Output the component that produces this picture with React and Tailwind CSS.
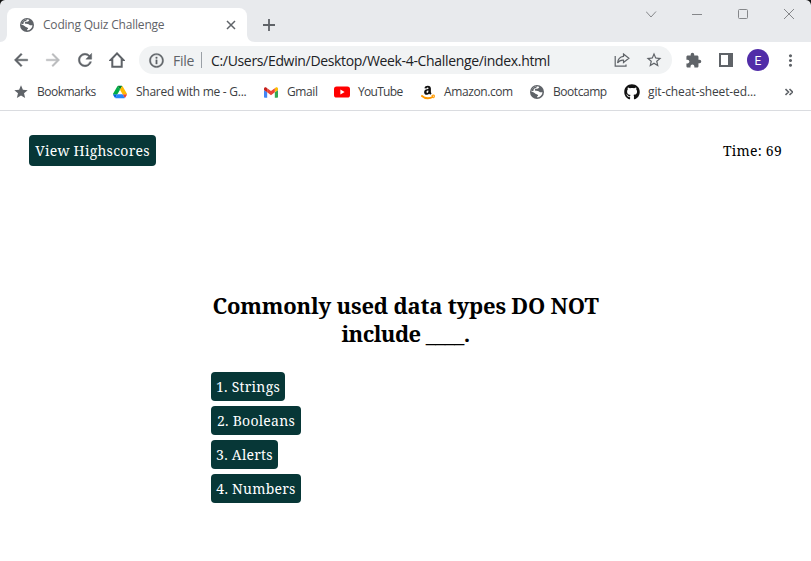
import React from "react";
import { FaGithub } from "react-icons/fa";
import { MdExtension, MdStar, MdMoreVert, MdStarOutline } from "react-icons/md";

const ui = "font-['Open_Sans','Noto_Sans',sans-serif]";

function Globe() {
  return (
    <svg width="14" height="14" viewBox="0 0 14 14" className="shrink-0">
      <circle cx="7" cy="7" r="7" fill="#5f6368" />
      <path d="M9.3 1.9C8.600 3.400 7.500 3.600 5.800 3.700 4.700 3.900 4.500 5.400 5.500 5.700 7 5.900 8.600 5.600 9.300 6.700 9.900 7.500 11 7.300 12.500 7.200 12.300 9.900 10.200 12.200 7.300 12.500L7.100 11.300C8.200 11 8.500 10.300 7.600 9.700 6.400 9.300 5.200 9 4.600 8.100 4 7.200 3 6.900 1.500 6.900 1.300 4 3.800 1.300 7 1.300 7.900 1.300 8.700 1.500 9.300 1.900Z" fill="#fff" />
      <path d="M1.500 6.500C1.600 3.800 4 1.300 7.500 1.300L6 2.900 3.800 3.700 3.500 5.800Z" fill="#5f6368" />
    </svg>
  );
}

function DriveIcon() {
  return (
    <svg width="14" height="14" viewBox="0 0 87.3 78" className="shrink-0">
      <path d="m6.6 66.85 3.85 6.65c.8 1.4 1.95 2.5 3.3 3.3l13.75-23.8H0c0 1.55.4 3.1 1.2 4.5z" fill="#0066da" />
      <path d="M43.65 25 29.9 1.2c-1.35.8-2.5 1.9-3.3 3.3L1.2 48.5A9 9 0 0 0 0 53h27.5z" fill="#00ac47" />
      <path d="M73.55 76.8c1.35-.8 2.5-1.9 3.3-3.3l9.25-16c.8-1.4 1.2-2.95 1.2-4.5H59.8l5.85 11.5z" fill="#ea4335" />
      <path d="M43.65 25 57.4 1.2C56.05.4 54.5 0 52.9 0H34.4c-1.6 0-3.15.45-4.5 1.2z" fill="#00832d" />
      <path d="M59.8 53H27.5L13.75 76.8c1.35.8 2.9 1.2 4.5 1.2h50.8c1.6 0 3.15-.45 4.5-1.2z" fill="#2684fc" />
      <path d="M73.4 26.5 60.7 4.5c-.8-1.4-1.95-2.5-3.3-3.3L43.65 25 59.8 53h27.45c0-1.55-.4-3.1-1.2-4.5z" fill="#ffba00" />
    </svg>
  );
}

function GmailIcon() {
  return (
    <svg width="14" height="11" viewBox="52 42 88 66" className="shrink-0">
      <path fill="#4285f4" d="M58 108h14V74L52 59v43c0 3.32 2.69 6 6 6" />
      <path fill="#34a853" d="M120 108h14c3.32 0 6-2.69 6-6V59l-20 15" />
      <path fill="#fbbc04" d="M120 48v26l20-15v-8c0-7.42-8.47-11.65-14.4-7.2" />
      <path fill="#ea4335" d="M72 74V48l24 18 24-18v26L96 92" />
      <path fill="#c5221f" d="M52 51v8l20 15V48l-5.6-4.2c-5.94-4.45-14.4-.22-14.4 7.2" />
    </svg>
  );
}

function YouTubeIcon() {
  return (
    <svg width="16" height="12" viewBox="0 0 16 12" className="shrink-0">
      <rect y="0.5" width="16" height="11" rx="2.6" fill="#f00" />
      <path d="M6.4 3.6 10.6 6 6.4 8.4Z" fill="#fff" />
    </svg>
  );
}

function AmazonIcon() {
  return (
    <svg width="14" height="15" viewBox="0 0 14 15" className="shrink-0">
      <path d="M3.4 3.200C3.700 1.500 5.100.7 6.800.7 8.900.7 9.900 1.800 9.900 3.500V6.900C9.900 7.600 10.200 7.900 10.600 8.400L9.200 9.800 8.200 8.700C7.500 9.500 6.700 9.800 5.800 9.800 4.200 9.800 3.100 8.800 3.100 7.200 3.100 5.100 4.800 4.200 7.400 4.100 7.500 3 7.200 2.600 6.600 2.600 6 2.600 5.700 2.900 5.500 3.500ZM7.400 5.500C6.100 5.500 5.500 6 5.500 7 5.500 8.400 7.400 8.300 7.400 6.300Z" fill="#111" fillRule="evenodd" />
      <path d="M.3 10.400C4 13.800 8.700 13.700 12.300 11.600" stroke="#f90" strokeWidth="1.9" fill="none" />
      <path d="M10.600 10.500C12 9.900 13.200 10 13.300 10.400 13.500 11 13.100 12.300 12.400 13" stroke="#f90" strokeWidth="1.1" fill="none" />
    </svg>
  );
}

function Glyph({ d, size, className }) {
  return (
    <svg width={size} height={size} viewBox="0 0 24 24" fill="currentColor" stroke="currentColor" strokeWidth="0.5" className={`shrink-0 ${className}`}>
      <path d={d} />
    </svg>
  );
}

function Bookmark({ icon, label, className }) {
  return (
    <div className={`flex h-9 shrink-0 items-center whitespace-nowrap ${className}`}>
      {icon}
      <span>{label}</span>
    </div>
  );
}

function TabStrip() {
  return (
    <div className="flex h-[42px] bg-[#e8eaed]">
      <svg width="7" height="42" viewBox="0 0 7 42" className="shrink-0">
        <path d="M0 0H5C2 .4 .4 2 0 5Z" fill="#111" />
        <path d="M7 34C7 39 4 42 0 42H7Z" fill="#fff" />
      </svg>
      <div className="mt-2 flex h-[34px] w-[240px] shrink-0 items-center rounded-t-lg bg-white pl-[13px]">
        <Globe />
        <span className="ml-[9px] w-[183px] whitespace-nowrap text-[12px] tracking-[-0.2px] text-[#5f6368]">Coding Quiz Challenge</span>
        <svg width="10" height="10" viewBox="0 0 10 10">
          <path d="M1 1 9 9M9 1 1 9" stroke="#5f6368" strokeWidth="1.5" />
        </svg>
      </div>
      <svg width="8" height="42" viewBox="0 0 8 42" className="shrink-0">
        <path d="M0 34C0 39 3 42 8 42H0Z" fill="#fff" />
      </svg>
      <svg width="12" height="12" viewBox="0 0 12 12" className="ml-2 mt-[19px] shrink-0">
        <path d="M6 0V12M0 6H12" stroke="#5f6368" strokeWidth="1.8" />
      </svg>
      <svg width="165" height="28" viewBox="0 0 165 28" className="ml-auto" fill="none" stroke="#85878a">
        <path d="M0 11.5 5 17 10 11.5" />
        <path d="M46 14.5H56" />
        <rect x="92.5" y="9.5" width="9" height="9" rx="1" />
        <path d="M138 9 148 19M148 9 138 19" />
        <path d="M160 0H165V5C164.600 2 163 .4 160 0Z" fill="#111" stroke="none" />
      </svg>
    </div>
  );
}

function Toolbar() {
  return (
    <div className="flex h-9 items-center text-[#5f6368]">
      <Glyph size={20} className="ml-[11px]" d="M20 11H7.830L13.420 5.410 12 4 4 12 12 20 13.410 18.590 7.830 13H20Z" />
      <Glyph size={20} className="ml-3 text-[#babcbe]" d="M12 4 10.590 5.410 16.170 11H4V13H16.170L10.590 18.590 12 20 20 12Z" />
      <Glyph size={20} className="ml-3" d="M17.650 6.350A7.958 7.958 0 0 0 12 4c-4.420 0-7.990 3.580-7.990 8s3.570 8 7.990 8c3.730 0 6.840-2.550 7.730-6h-2.080A5.990 5.990 0 0 1 12 18c-3.310 0-6-2.690-6-6s2.690-6 6-6c1.660 0 3.140.69 4.220 1.780L13 11h7V4z" />
      <svg width="16" height="16" viewBox="0 0 16 16" className="ml-[14px]" fill="none" stroke="#5f6368" strokeWidth="2">
        <path d="M8 1.4 1.7 8H3.300V14.800H12.700V8H14.300Z" />
      </svg>
      <div className="ml-[14px] flex h-7 w-[533px] shrink-0 items-center rounded-full bg-[#f1f3f4] pl-[9px]">
        <Glyph size={17} className="" d="M11 7h2v2h-2zm0 4h2v6h-2zm1-9C6.480 2 2 6.480 2 12s4.480 10 10 10 10-4.480 10-10S17.520 2 12 2zm0 18c-4.410 0-8-3.590-8-8s3.590-8 8-8 8 3.590 8 8-3.590 8-8 8z" />
        <span className="ml-2 w-[28px] text-[14px] tracking-[-0.3px]">File</span>
        <span className="h-4 w-px bg-[#9aa0a6]" />
        <span className="ml-[9px] w-[403px] shrink-0 whitespace-nowrap text-[14px] tracking-[-0.33px] text-[#202124]">C:/Users/Edwin/Desktop/Week-4-Challenge/index.html</span>
        <svg width="16" height="14" viewBox="0 0 16 14" className="shrink-0" fill="none" stroke="#5f6368" strokeWidth="1.2">
          <path d="M1.2 3V13.200H12V11.500" />
          <path d="M9.500 1 14.900 5.300 9.500 9.500V7.200C6.600 7 4.800 8.100 3.600 10 3.900 6.300 6 3.800 9.500 3.400Z" />
        </svg>
        <MdStarOutline size={18} className="ml-[15px] shrink-0" />
      </div>
      <MdExtension size={17} className="ml-[13px]" />
      <svg width="14" height="14" viewBox="0 0 14 14" className="ml-[17px]">
        <rect x="1" y="1" width="12" height="12" fill="none" stroke="#5f6368" strokeWidth="2" />
        <path d="M9 0H14V14H9Z" fill="#5f6368" />
      </svg>
      <div className="ml-[14px] flex size-[22px] items-center justify-center rounded-full bg-[#512da8] pt-px font-[Roboto,sans-serif] text-[12px] text-white">E</div>
      <MdMoreVert size={19} className="ml-[12px]" />
    </div>
  );
}

function BookmarksBar() {
  return (
    <div className="flex h-[33px] items-center border-b border-[#dadce0] pb-1 text-[12px] text-[#3c4043]">
      <Bookmark className="ml-[13px] w-[100px] gap-2 tracking-[-0.5px]" icon={<MdStar size={16} color="#5f6368" />} label="Bookmarks" />
      <Bookmark className="w-[151px] gap-[9px] tracking-[-0.26px]" icon={<DriveIcon />} label="Shared with me - G..." />
      <Bookmark className="w-[70px] gap-[9px] tracking-[-0.4px]" icon={<GmailIcon />} label="Gmail" />
      <Bookmark className="w-[87px] gap-2 tracking-[-0.7px]" icon={<YouTubeIcon />} label="YouTube" />
      <Bookmark className="w-[109px] gap-[9px] tracking-[-0.4px]" icon={<AmazonIcon />} label="Amazon.com" />
      <Bookmark className="w-[94px] gap-[9px] tracking-[-0.45px]" icon={<Globe />} label="Bootcamp" />
      <Bookmark className="w-[161px] gap-2 tracking-[-0.12px]" icon={<FaGithub size={16} color="#111" />} label="git-cheat-sheet-ed..." />
      <svg width="8" height="8" viewBox="0 0 8 8" fill="none" stroke="#5f6368" strokeWidth="1.6">
        <path d="M.5 1 3.500 4 .5 7M4.500 1 7.500 4 4.500 7" />
      </svg>
    </div>
  );
}

const answers = [
  { label: "1. Strings", box: "w-[74px]" },
  { label: "2. Booleans", box: "w-[90px]" },
  { label: "3. Alerts", box: "w-[67px]" },
  { label: "4. Numbers", box: "w-[90px]" },
];

function Quiz() {
  return (
    <main className="h-[450px] font-['Noto_Serif','DejaVu_Serif',serif] text-[14px] leading-[21px] tracking-[0.25px] text-black">
      <header className="flex items-center justify-between pl-[29px] pr-[29px] pt-6">
        <button className="h-[31px] w-[127px] whitespace-nowrap rounded bg-[#073737] text-white">View Highscores</button>
        <span>Time: 69</span>
      </header>
      <section className="mx-auto mt-[125px] w-[389px]">
        <h1 className="whitespace-nowrap text-center text-[22px] font-bold leading-7 tracking-[-0.2px]">
          Commonly used data types DO NOT
          <br />
          <span className="tracking-[-0.6px]">include ____.</span>
        </h1>
        <div className="mt-[25px] flex flex-col items-start gap-[5px]">
          {answers.map((a) => (
            <button key={a.label} className={`h-[29px] whitespace-nowrap rounded bg-[#073737] text-white ${a.box}`}>{a.label}</button>
          ))}
        </div>
      </section>
    </main>
  );
}

export default function App() {
  return (
    <div className={`h-[561px] w-[811px] overflow-hidden bg-white ${ui}`}>
      <TabStrip />
      <Toolbar />
      <BookmarksBar />
      <Quiz />
    </div>
  );
}
